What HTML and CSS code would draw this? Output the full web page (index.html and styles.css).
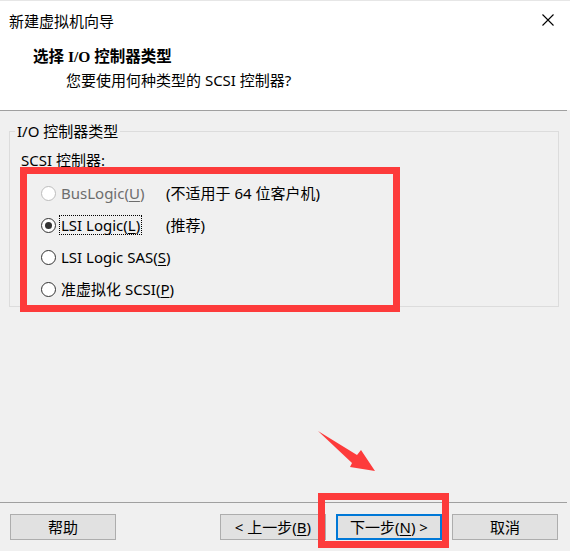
FILE: index.html
```html
<!DOCTYPE html>
<html lang="zh-CN">
<head>
<meta charset="utf-8">
<title>新建虚拟机向导</title>
<link rel="stylesheet" href="styles.css">
</head>
<body>
<div class="window">
  <header class="header">
    <div class="titlebar">
      <span class="title">新建虚拟机向导</span>
      <svg class="close" width="12" height="12" viewBox="0 0 12 12"><path d="M0.5 0.5 L11.5 11.5 M11.5 0.5 L0.5 11.5" stroke="#000" stroke-width="1.1" fill="none"/></svg>
    </div>
    <div class="heading"><span class="latin">选择 I/O 控制器类型</span></div>
    <div class="subtitle">您要使用何种类型的 SCSI 控制器?</div>
  </header>
  <div class="rule"></div>
  <main class="main">
    <fieldset class="group">
      <legend class="legend">I/O 控制器类型</legend>
      <div class="label">SCSI 控制器:</div>
      <div class="options">
        <div class="opt disabled"><span class="radio"></span><span class="text">BusLogic(<u>U</u>)</span></div>
        <div class="note">(不适用于 64 位客户机)</div>
        <div class="opt"><span class="radio checked"></span><span class="text focus">LSI Logic(<u>L</u>)</span></div>
        <div class="note">(推荐)</div>
        <div class="opt"><span class="radio"></span><span class="text">LSI Logic SAS(<u>S</u>)</span></div>
        <div class="note"></div>
        <div class="opt"><span class="radio"></span><span class="text">准虚拟化 SCSI(<u>P</u>)</span></div>
        <div class="note"></div>
      </div>
    </fieldset>
  </main>
  <div class="rule"></div>
  <footer class="footer">
    <button class="btn">帮助</button>
    <div class="nav">
      <button class="btn">&lt; 上一步(<u>B</u>)</button>
      <button class="btn primary">下一步(<u>N</u>) &gt;</button>
      <button class="btn">取消</button>
    </div>
  </footer>

  <div class="mark mark-options"></div>
  <div class="mark mark-next"></div>
  <svg class="arrow" width="70" height="50" viewBox="0 0 70 50"><polygon points="8,6 47,30 51,25 65,46 40,42 42,38" fill="#fd3b3b"/></svg>
</div>
</body>
</html>
```

FILE: styles.css
```css
* { box-sizing: border-box; }
html, body { margin: 0; padding: 0; }
body {
  background: #f0f0f0;
  font-family: "Noto Sans", "Noto Sans CJK SC", sans-serif;
  font-size: 15px;
  color: #000;
}
.window {
  position: relative;
  width: 570px;
  height: 551px;
  display: flex;
  flex-direction: column;
  overflow: hidden;
}
.header {
  background: #fff;
  height: 110px;
  border-top: 1px solid #e6e6e6;
}
.titlebar {
  height: 39px;
  display: flex;
  align-items: center;
  justify-content: space-between;
  padding: 0 16px 0 9px;
  line-height: 20px;
}
.close { display: block; margin-top: -2px; }
.heading {
  margin: 7px 0 0 33px;
  line-height: 20px;
  font-weight: bold;
  font-family: "Liberation Serif", "Noto Sans CJK SC", serif;
  font-size: 15.5px;
}
.subtitle {
  margin: 3px 0 0 66px;
  line-height: 20px;
}
.rule {
  height: 1px;
  background: #a0a0a0;
  margin-right: 3px;
  flex: none;
}
.main { flex: 1; }
.group {
  margin: 10px 11px 0 9px;
  border: 1px solid #dcdcdc;
  padding: 9px 0 1px 5px;
  min-width: 0;
}
.legend {
  padding: 0 2px;
  line-height: 20px;
}
.label {
  margin-left: 6px;
  line-height: 20px;
}
.options {
  margin: 7px 0 0 26px;
  display: grid;
  grid-template-columns: 125px auto;
  grid-auto-rows: 32px;
  align-items: center;
}
.opt {
  display: flex;
  align-items: center;
  line-height: 20px;
  white-space: nowrap;
  min-width: 0;
  overflow: visible;
}
.note { line-height: 20px; white-space: nowrap; }
.radio {
  width: 15px;
  height: 15px;
  border-radius: 50%;
  border: 1px solid #333;
  background: #fff;
  margin-right: 4px;
  display: flex;
  align-items: center;
  justify-content: center;
  flex: none;
}
.radio.checked::after {
  content: "";
  width: 7px;
  height: 7px;
  border-radius: 50%;
  background: #333;
}
.disabled .radio { border-color: #bcbcbc; }
.disabled .text { color: #6d6d6d; }
.text { padding: 0 1px; flex: none; }
.focus {
  outline: 1px dotted #000;
  line-height: 18px;
}
u { text-underline-offset: 2px; }
.footer {
  height: 48px;
  display: flex;
  align-items: center;
  justify-content: space-between;
  padding: 0 12px 0 10px;
}
.nav { display: flex; gap: 10px; }
.btn {
  width: 106px;
  height: 26px;
  background: #e1e1e1;
  border: 1px solid #adadad;
  font: inherit;
  line-height: 20px;
  padding: 0;
  color: #000;
}
.btn.primary { border: 2px solid #0078d7; }
.mark {
  position: absolute;
  border: 7px solid #fd3b3b;
}
.mark-options { left: 20px; top: 167px; width: 380px; height: 145px; }
.mark-next { left: 318px; top: 493px; width: 131px; height: 55px; }
.arrow { position: absolute; left: 310px; top: 425px; }
```
